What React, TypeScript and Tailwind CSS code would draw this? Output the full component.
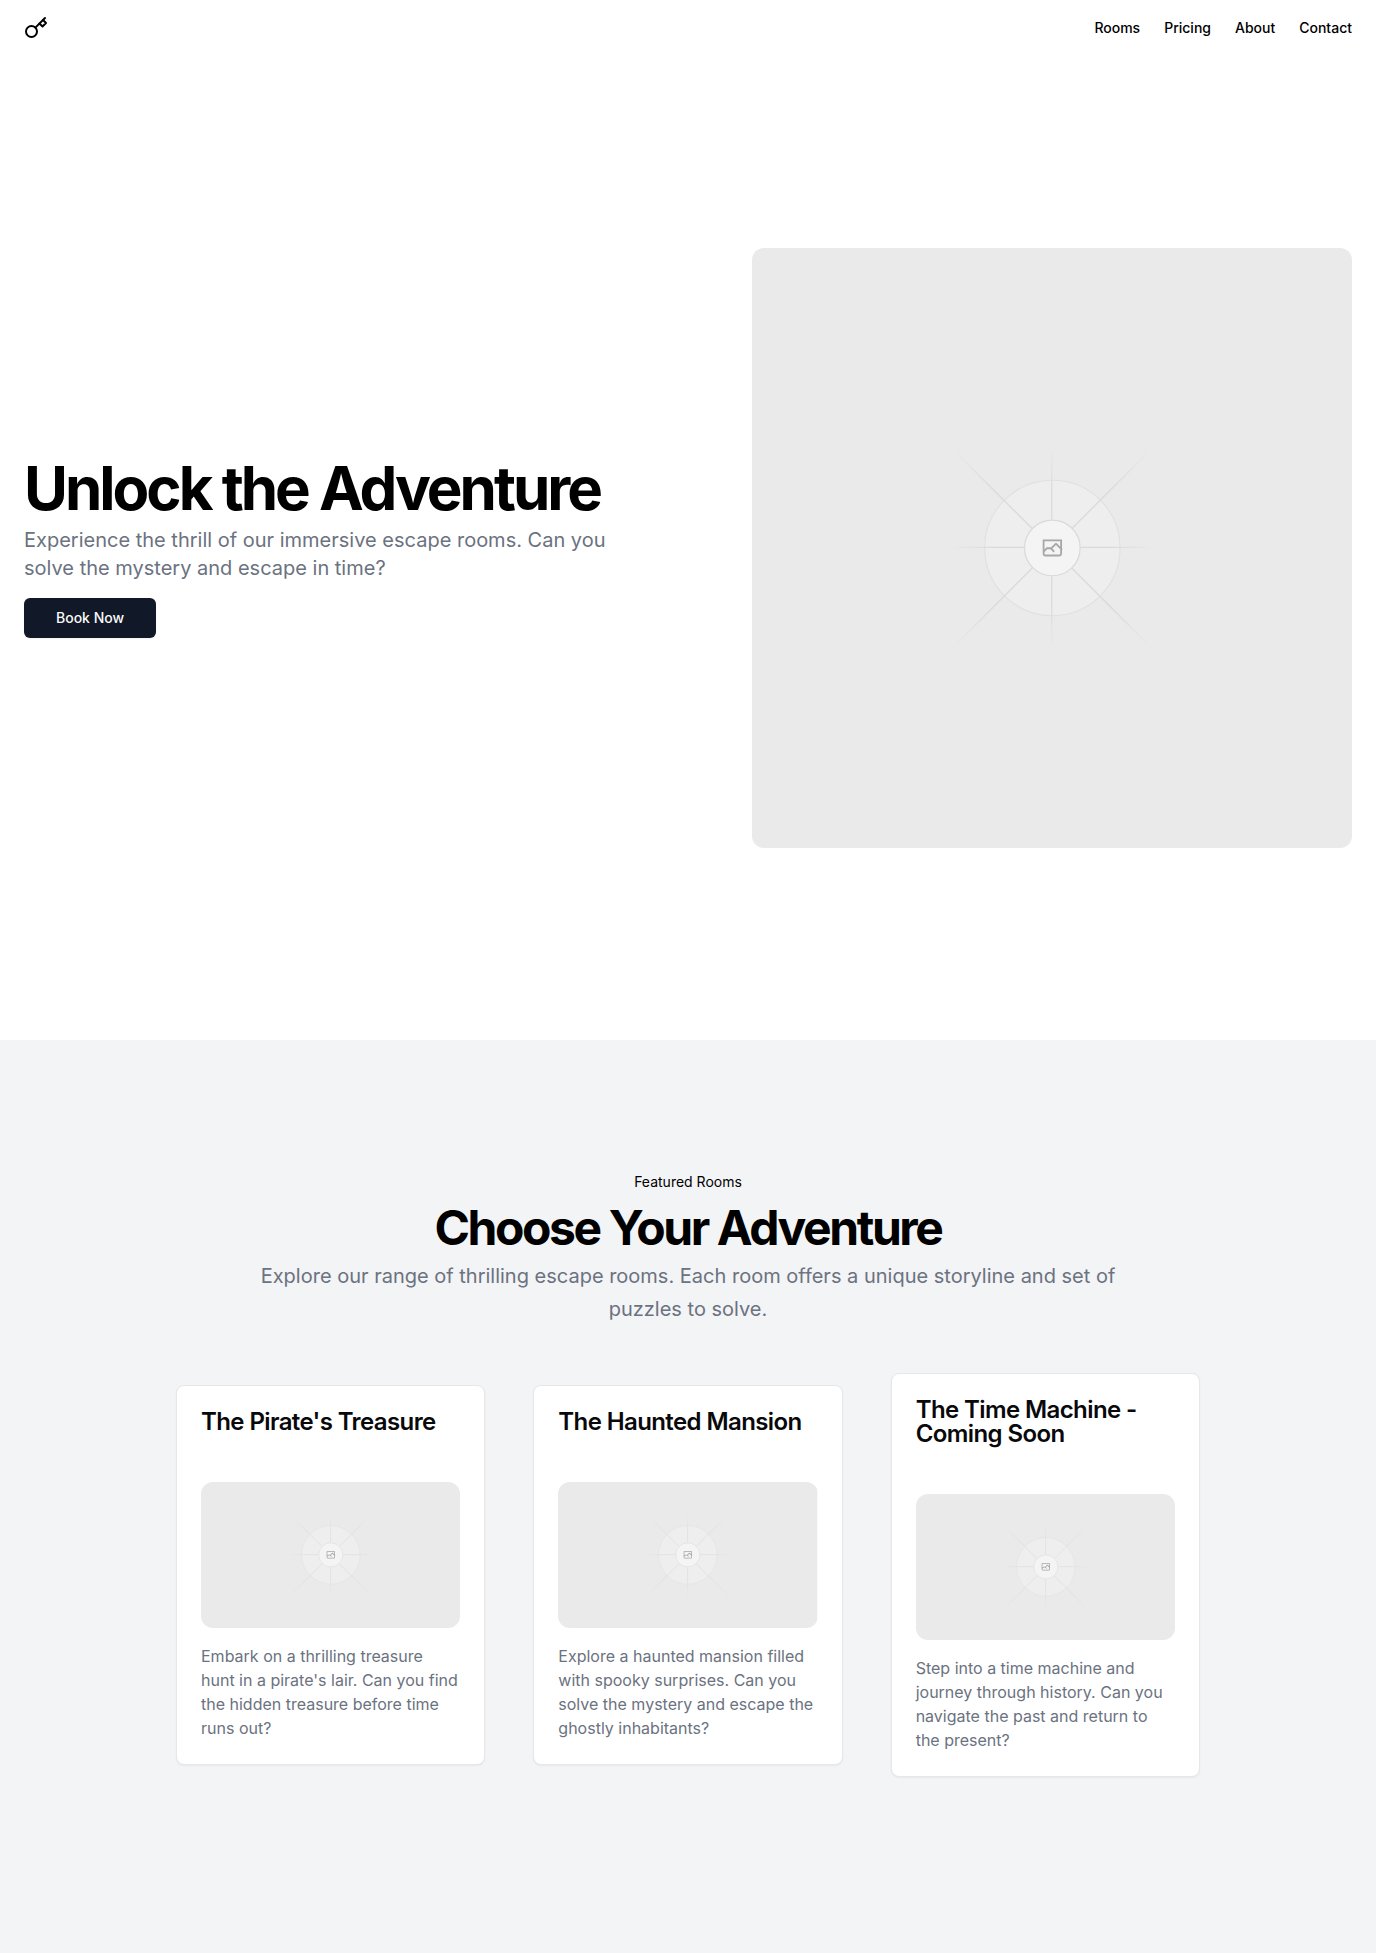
import React, { useId } from "react";

const navLinks = ["Rooms", "Pricing", "About", "Contact"];

const rooms = [
  {
    title: "The Pirate's Treasure",
    text: "Embark on a thrilling treasure hunt in a pirate's lair. Can you find the hidden treasure before time runs out?",
  },
  {
    title: "The Haunted Mansion",
    text: "Explore a haunted mansion filled with spooky surprises. Can you solve the mystery and escape the ghostly inhabitants?",
  },
  {
    title: "The Time Machine - Coming Soon",
    text: "Step into a time machine and journey through history. Can you navigate the past and return to the present?",
  },
];

function KeyIcon() {
  return (
    <svg
      className="h-6 w-6"
      viewBox="0 0 24 24"
      fill="none"
      stroke="currentColor"
      strokeWidth="2"
      strokeLinecap="round"
      strokeLinejoin="round"
      aria-hidden="true"
    >
      <circle cx="7.5" cy="15.5" r="5.5" />
      <path d="m21 2-9.6 9.6" />
      <path d="m15.5 7.5 3 3L22 7l-3-3" />
    </svg>
  );
}

type FadeProps = { id: string; x1: number; y1: number; x2: number; y2: number };

function Fade({ id, x1, y1, x2, y2 }: FadeProps) {
  return (
    <linearGradient id={id} x1={x1} y1={y1} x2={x2} y2={y2} gradientUnits="userSpaceOnUse">
      <stop stopColor="#C9C9C9" stopOpacity="0" />
      <stop offset=".208" stopColor="#C9C9C9" />
      <stop offset=".792" stopColor="#C9C9C9" />
      <stop offset="1" stopColor="#C9C9C9" stopOpacity="0" />
    </linearGradient>
  );
}

function Placeholder({ className, label }: { className: string; label: string }) {
  const id = useId();
  return (
    <svg
      className={className}
      viewBox="0 0 1200 1200"
      preserveAspectRatio="xMidYMid slice"
      fill="none"
      role="img"
      aria-label={label}
    >
      <rect width="1200" height="1200" fill="#EAEAEA" />
      <g opacity=".5">
        <g opacity=".5">
          <circle cx="600.7" cy="599.9" r="136.6" fill="#FAFAFA" />
          <circle cx="600.7" cy="599.9" r="135.4" stroke="#C9C9C9" strokeWidth="2.418" />
        </g>
        <g strokeWidth="2.418">
          <path stroke={`url(#${id}a)`} d="M404.3 796.6 795.7 405.2" />
          <path stroke={`url(#${id}b)`} d="M404.846 598.671h391.726" />
          <path stroke={`url(#${id}c)`} d="M599.5 795.742V404.017" />
          <path stroke={`url(#${id}d)`} d="m795.717 796.597-391.441-391.44" />
        </g>
        <circle cx="600.7" cy="599.9" r="56.8" fill="#fff" />
        <path
          fill="#666"
          fillRule="evenodd"
          clipRule="evenodd"
          d="M616.426 586.58h-31.434v16.176l3.553-3.554.531-.531h9.068l.074-.074 8.463-8.463h2.565l7.18 7.181V586.58Zm-15.715 14.654 3.698 3.699 1.283 1.282-2.565 2.565-1.282-1.283-5.2-5.199h-6.066l-5.514 5.514-.073.073v2.876a2.418 2.418 0 0 0 2.418 2.418h26.598a2.418 2.418 0 0 0 2.418-2.418v-8.317l-8.463-8.463-7.181 7.181-.071.072Zm-19.347 5.442v4.085a6.045 6.045 0 0 0 6.046 6.045h26.598a6.044 6.044 0 0 0 6.045-6.045v-7.108l1.356-1.355-1.282-1.283-.074-.073v-17.989h-38.689v23.43l-.146.146.146.147Z"
        />
        <circle cx="600.7" cy="599.9" r="55.6" stroke="#C9C9C9" strokeWidth="2.418" />
      </g>
      <defs>
        <Fade id={`${id}a`} x1={404} y1={797} x2={796} y2={405} />
        <Fade id={`${id}b`} x1={796.9} y1={599} x2={404.5} y2={599} />
        <Fade id={`${id}c`} x1={600} y1={403.7} x2={600} y2={796} />
        <Fade id={`${id}d`} x1={404} y1={405} x2={796} y2={797} />
      </defs>
    </svg>
  );
}

export default function App() {
  return (
    <div className="flex min-h-screen flex-col bg-white font-['Inter',sans-serif] text-black">
      <header className="flex h-14 items-center px-6">
        <a href="#home" aria-label="Escape rooms home">
          <KeyIcon />
        </a>
        <nav className="ml-auto flex gap-6">
          {navLinks.map((name) => (
            <a key={name} href={`#${name.toLowerCase()}`} className="text-sm font-medium hover:underline">
              {name}
            </a>
          ))}
        </nav>
      </header>
      <main className="flex-1">
        <section className="px-6 py-48">
          <div className="grid items-center gap-12 lg:grid-cols-[1fr_600px]">
            <div className="flex flex-col items-start gap-4">
              <div className="flex flex-col gap-2">
                <h1 className="text-6xl leading-none font-bold tracking-tighter">Unlock the Adventure</h1>
                <p className="max-w-[600px] text-xl text-[#6b7280]">
                  Experience the thrill of our immersive escape rooms. Can you solve the mystery and escape in time?
                </p>
              </div>
              <button
                type="button"
                className="h-10 rounded-md bg-[#111827] px-8 text-sm font-medium text-[#f9fafb] shadow-xs"
              >
                Book Now
              </button>
            </div>
            <Placeholder className="aspect-square w-full rounded-xl" label="Hero" />
          </div>
        </section>
        <section id="rooms" className="bg-[#f3f4f6] px-6 py-32">
          <div className="flex flex-col items-center gap-2 text-center">
            <div className="rounded-lg bg-[#f3f4f6] px-3 py-1 text-sm">Featured Rooms</div>
            <h2 className="text-5xl leading-none font-bold tracking-tighter">Choose Your Adventure</h2>
            <p className="max-w-[900px] text-xl leading-relaxed text-[#6b7280]">
              Explore our range of thrilling escape rooms. Each room offers a unique storyline and set of puzzles to
              solve.
            </p>
          </div>
          <div className="mx-auto grid max-w-5xl items-center gap-12 py-12 lg:grid-cols-3">
            {rooms.map((room) => (
              <article
                key={room.title}
                className="rounded-lg border border-[#e5e7eb] bg-white p-6 text-[#09090b] shadow-xs"
              >
                <h3 className="text-2xl leading-none font-semibold tracking-tight">{room.title}</h3>
                <Placeholder className="mt-12 aspect-video w-full rounded-xl" label={room.title} />
                <p className="mt-4 text-base text-[#6b7280]">{room.text}</p>
              </article>
            ))}
          </div>
        </section>
      </main>
    </div>
  );
}
